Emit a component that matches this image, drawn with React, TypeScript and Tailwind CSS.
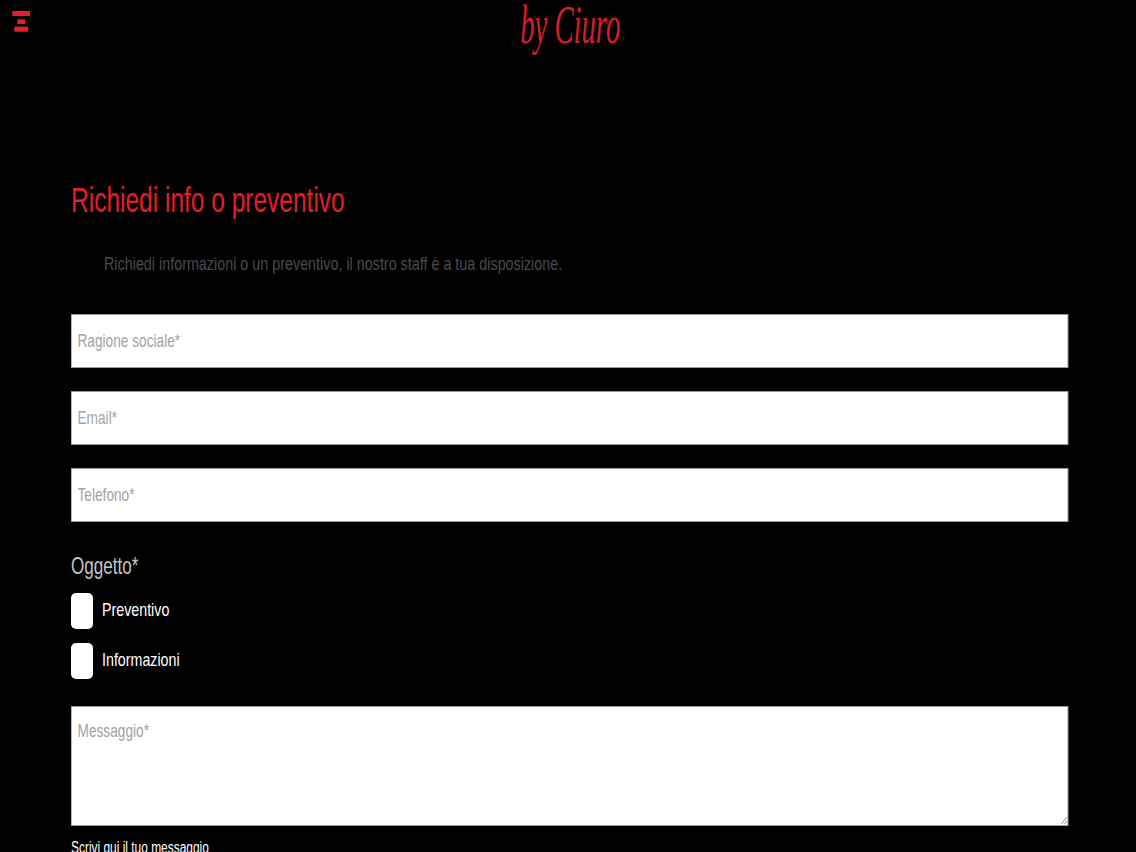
export default function App() {
  const field = "h-[54px] w-[138.9%] origin-left scale-x-[0.72] border border-[#999] bg-white px-[8px] text-[19px] outline-none placeholder:text-[#a3a3a3]";
  return (
    <div className="h-[852px] w-full overflow-hidden bg-black font-['Liberation_Sans',sans-serif]">
      <header className="relative flex h-[140px] justify-center">
        <svg className="absolute left-[12px] top-[11px]" width="18" height="21" viewBox="0 0 18 21" fill="#e51e2b">
          <rect x="0.3" y="0" width="17.7" height="5" />
          <rect x="5.3" y="8.3" width="8" height="4.7" />
          <rect x="2.3" y="15.7" width="13.7" height="5" />
        </svg>
        <span className="ml-[5px] mt-[-1px] inline-block h-[52px] scale-x-[0.53] font-['Liberation_Serif',serif] text-[54px] leading-[52px] whitespace-nowrap text-[#d81c2b] italic">by Ciuro</span>
      </header>
      <main className="ml-[71px] w-[997px]">
        <h1 className="mt-[38px] h-[44px] origin-left scale-x-[0.7] text-[35px] leading-[44px] font-normal whitespace-nowrap text-[#e81c2a]">Richiedi info o preventivo</h1>
        <p className="mt-[30px] h-[24px] origin-left translate-x-[33px] scale-x-[0.755] text-[19px] leading-[24px] whitespace-nowrap text-[#4a4a4e]">Richiedi informazioni o un preventivo, il nostro staff è a tua disposizione.</p>
        <form className="mt-[38px] flex flex-col">
          <div className="flex flex-col gap-[23px]">
            <input placeholder="Ragione sociale*" className={field} />
            <input placeholder="Email*" className={field} />
            <input placeholder="Telefono*" className={field} />
          </div>
          <div className="mt-[28px] h-[32px] origin-left scale-x-[0.71] text-[24px] leading-[32px] text-[#c4c4c4]">Oggetto*</div>
          <label className="mt-[11px] flex h-[36px] items-center gap-[9px] text-[19px] text-white">
            <span className="h-[36px] w-[22px] rounded-[5px] bg-white" />
            <span className="origin-left scale-x-[0.75] pb-[2px]">Preventivo</span>
          </label>
          <label className="mt-[14px] flex h-[36px] items-center gap-[9px] text-[19px] text-white">
            <span className="h-[36px] w-[22px] rounded-[5px] bg-white" />
            <span className="origin-left scale-x-[0.75] pb-[2px]">Informazioni</span>
          </label>
          <textarea placeholder="Messaggio*" className="mt-[27px] block h-[120px] w-[138.9%] origin-left scale-x-[0.72] border border-[#999] bg-white px-[8px] py-[12px] text-[19px] leading-[24px] outline-none placeholder:text-[#a3a3a3]" />
          <div className="mt-[12px] origin-left scale-x-[0.745] text-[16px] leading-[20px] whitespace-nowrap text-white">Scrivi qui il tuo messaggio</div>
        </form>
      </main>
    </div>
  );
}
